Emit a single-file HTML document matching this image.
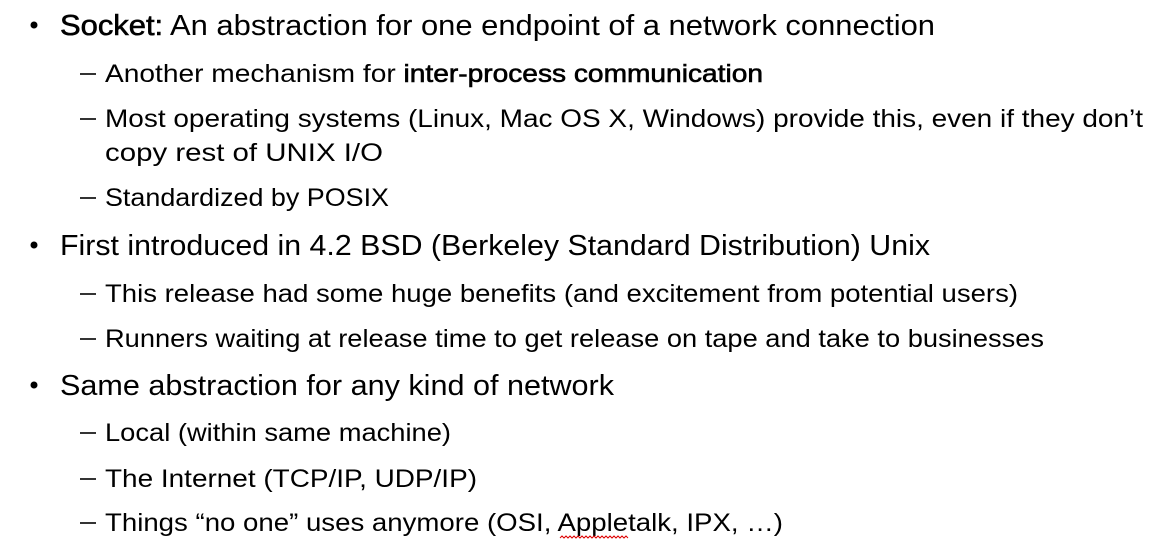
<!DOCTYPE html>
<html><head><meta charset="utf-8"><style>
html,body{margin:0;padding:0;background:#fff;}
svg{display:block;}
text{font-family:"Liberation Sans",sans-serif;fill:#000;}
.m{font-size:29px;}
.s{font-size:25px;}
.b{stroke:#000;stroke-width:0.6px;}
</style></head><body>
<svg width="1164" height="552" viewBox="0 0 1164 552" xmlns="http://www.w3.org/2000/svg">
<g fill="#000">
<circle cx="34" cy="25" r="3.5"/>
<circle cx="34" cy="245" r="3.5"/>
<circle cx="34" cy="385" r="3.5"/>
</g>
<g stroke="#000" stroke-width="1.6">
<line x1="80" y1="74" x2="96" y2="74"/>
<line x1="80" y1="119" x2="96" y2="119"/>
<line x1="80" y1="198" x2="96" y2="198"/>
<line x1="80" y1="294" x2="96" y2="294"/>
<line x1="80" y1="339" x2="96" y2="339"/>
<line x1="80" y1="433" x2="96" y2="433"/>
<line x1="80" y1="479" x2="96" y2="479"/>
<line x1="80" y1="523" x2="96" y2="523"/>
</g>
<text class="m" x="60" y="35" textLength="875" lengthAdjust="spacingAndGlyphs"><tspan class="b">Socket:</tspan> An abstraction for one endpoint of a network connection</text>
<text class="s" x="105" y="82" textLength="658" lengthAdjust="spacingAndGlyphs">Another mechanism for <tspan class="b">inter-process communication</tspan></text>
<text class="s" x="105" y="127" textLength="1038" lengthAdjust="spacingAndGlyphs">Most operating systems (Linux, Mac OS X, Windows) provide this, even if they don’t</text>
<text class="s" x="105" y="161" textLength="278" lengthAdjust="spacingAndGlyphs">copy rest of UNIX I/O</text>
<text class="s" x="105" y="206" textLength="284" lengthAdjust="spacingAndGlyphs">Standardized by POSIX</text>
<text class="m" x="60" y="255" textLength="870" lengthAdjust="spacingAndGlyphs">First introduced in 4.2 BSD (Berkeley Standard Distribution) Unix</text>
<text class="s" x="105" y="302" textLength="913" lengthAdjust="spacingAndGlyphs">This release had some huge benefits (and excitement from potential users)</text>
<text class="s" x="105" y="347" textLength="939" lengthAdjust="spacingAndGlyphs">Runners waiting at release time to get release on tape and take to businesses</text>
<text class="m" x="60" y="395" textLength="554" lengthAdjust="spacingAndGlyphs">Same abstraction for any kind of network</text>
<text class="s" x="105" y="441" textLength="346" lengthAdjust="spacingAndGlyphs">Local (within same machine)</text>
<text class="s" x="105" y="487" textLength="372" lengthAdjust="spacingAndGlyphs">The Internet (TCP/IP, UDP/IP)</text>
<text class="s" x="105" y="531" textLength="678" lengthAdjust="spacingAndGlyphs">Things “no one” uses anymore (OSI, Appletalk, IPX, …)</text>
<path d="M560 538 l2 -2 l2 2 l2 -2 l2 2 l2 -2 l2 2 l2 -2 l2 2 l2 -2 l2 2 l2 -2 l2 2 l2 -2 l2 2 l2 -2 l2 2 l2 -2 l2 2 l2 -2 l2 2 l2 -2 l2 2 l2 -2 l2 2 l2 -2 l2 2 l2 -2 l2 2 l2 -2 l2 2 l2 -2 l2 2 l2 -2 l2 2" fill="none" stroke="#d00" stroke-width="1"/>
</svg>
</body></html>
